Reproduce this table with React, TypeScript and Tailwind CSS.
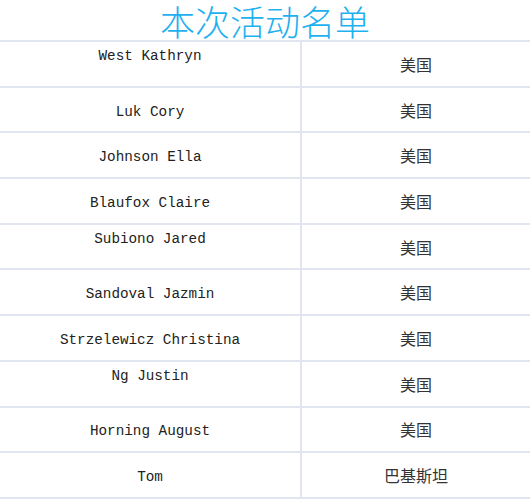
// 名单表格：标题 + 两列（姓名 / 国家）
const rows = [
  { name: "West Kathryn", country: "美国", top: true },
  { name: "Luk Cory", country: "美国" },
  { name: "Johnson Ella", country: "美国" },
  { name: "Blaufox Claire", country: "美国" },
  { name: "Subiono Jared", country: "美国", top: true },
  { name: "Sandoval Jazmin", country: "美国" },
  { name: "Strzelewicz Christina", country: "美国" },
  { name: "Ng Justin", country: "美国", top: true },
  { name: "Horning August", country: "美国" },
  { name: "Tom", country: "巴基斯坦" },
];

export default function App() {
  return (
    <div className="w-[530px] h-[500px] overflow-hidden bg-white">
      <h1 className="h-[40px] text-center text-[35px] leading-[41px] font-light text-[#1fb0f0] font-['Noto_Sans_CJK_SC',sans-serif]">
        本次活动名单
      </h1>
      <div className="border-t-2 border-[#e1e5ef]">
        {rows.map((r) => (
          <div
            key={r.name}
            className="grid grid-cols-[302px_1fr] h-[45.7px] border-b-2 border-[#e1e5ef]"
          >
            <div
              className={
                r.top
                  ? "flex justify-center items-start pt-[5px] border-r-2 border-[#e1e5ef] text-[14.3px] leading-[18px] text-[#222] font-['Liberation_Mono',monospace]"
                  : "flex justify-center items-center pt-[4px] border-r-2 border-[#e1e5ef] text-[14.3px] leading-[18px] text-[#222] font-['Liberation_Mono',monospace]"
              }
            >
              {r.name}
            </div>
            <div className="flex justify-center items-center text-[16px] text-[#333] font-['Noto_Sans_CJK_SC',sans-serif]">
              {r.country}
            </div>
          </div>
        ))}
      </div>
    </div>
  );
}
